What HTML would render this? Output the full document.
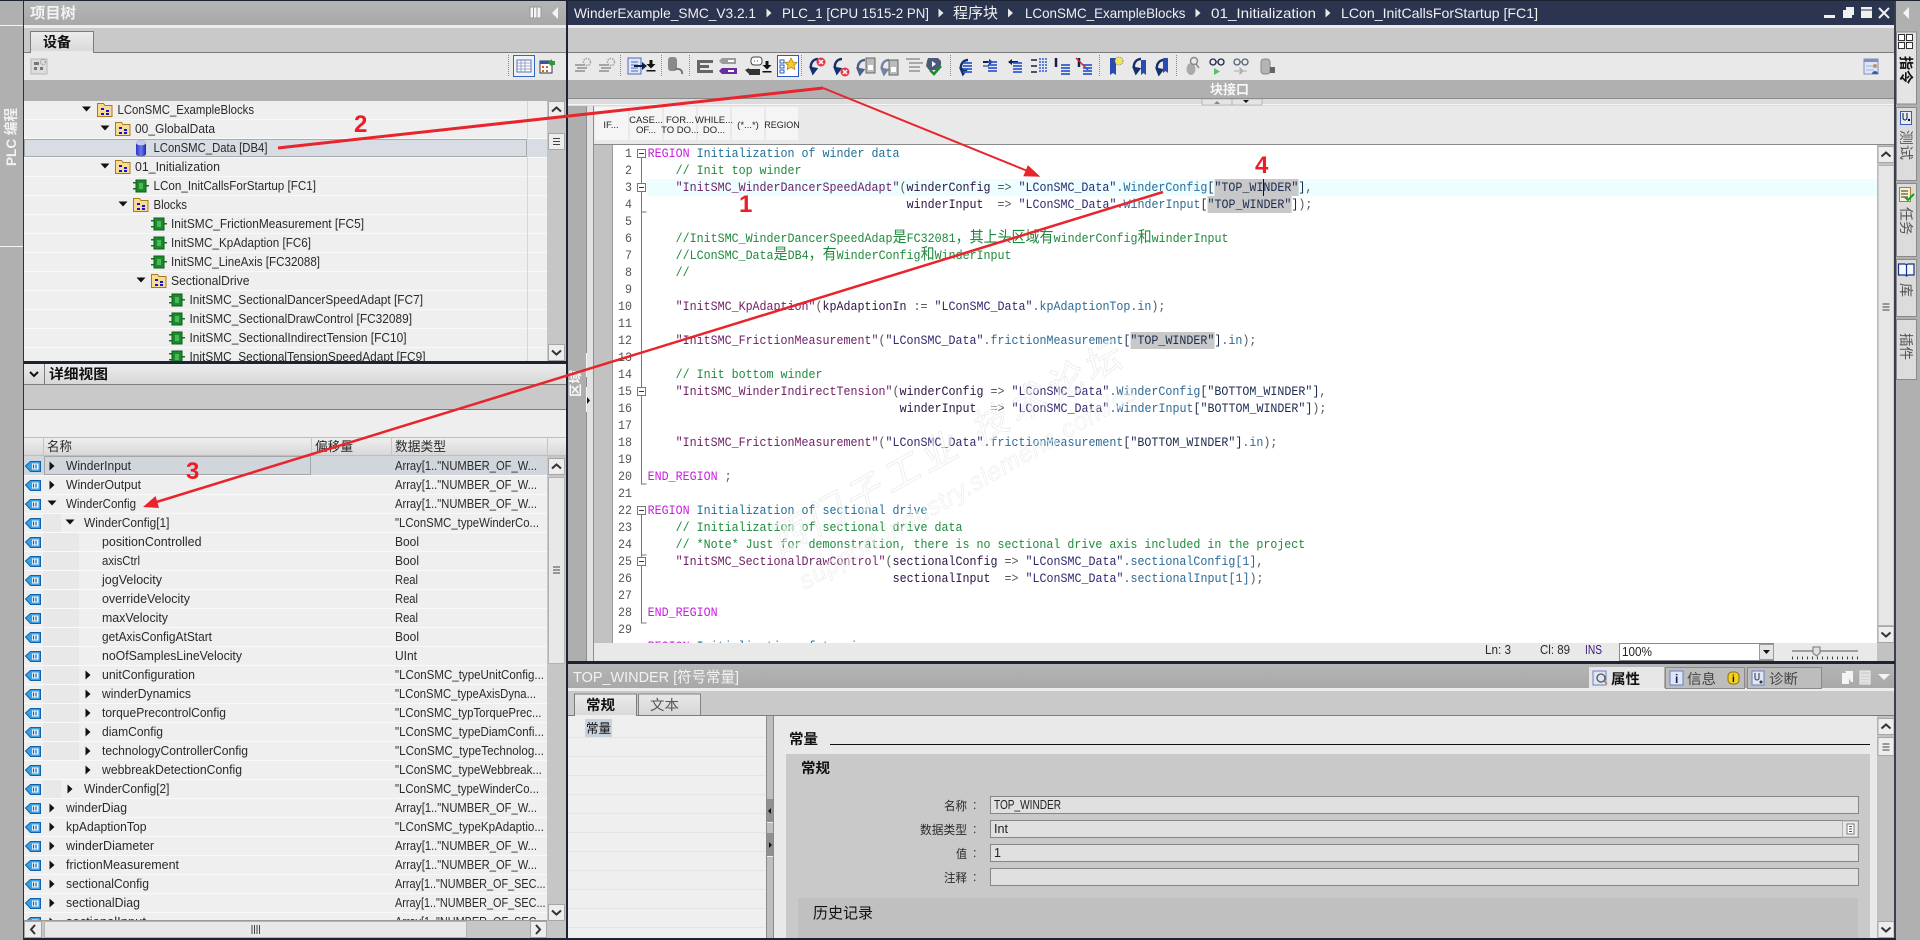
<!DOCTYPE html>
<html><head><meta charset="utf-8"><title>TIA Portal</title>
<style>
html,body{margin:0;padding:0;background:#1c2333;overflow:hidden}
svg{display:block}
text{font-family:"Liberation Sans","Noto Sans CJK SC",sans-serif;font-size:12.5px;fill:#2a2a2a;white-space:pre}
.cj{font-family:"Noto Sans CJK SC","WenQuanYi Zen Hei",sans-serif}
.w{fill:#f0f0f0}
.c text{font-family:"Liberation Mono","Noto Sans CJK SC",monospace;font-size:13px}
.hz{font-family:"Noto Sans CJK SC",monospace;font-size:15.6px}
.kw{fill:#c81ee0}.rc{fill:#1f6f98}.cm{fill:#1e8a3c}.fn{fill:#6e1e62}.op{fill:#555}.pa{fill:#2a1440}.db{fill:#2f2a6e}.me{fill:#2c6a96}.st{fill:#1c2c50}
.n{font-weight:bold;font-size:24px;fill:#ee1c25}
.sn{font-size:9.5px;fill:#222;text-anchor:middle}
</style></head><body>
<svg xmlns="http://www.w3.org/2000/svg" width="1920" height="940" viewBox="0 0 1920 940">
<defs>
<linearGradient id="gT" x1="0" y1="0" x2="0" y2="1"><stop offset="0" stop-color="#b6b6b6"/><stop offset="1" stop-color="#a8a8a8"/></linearGradient>
<linearGradient id="gH" x1="0" y1="0" x2="0" y2="1"><stop offset="0" stop-color="#f0f0f0"/><stop offset="1" stop-color="#d6d6d6"/></linearGradient>
<linearGradient id="gD" x1="0" y1="0" x2="0" y2="1"><stop offset="0" stop-color="#ececec"/><stop offset="1" stop-color="#d8d8d8"/></linearGradient>
<linearGradient id="gC" x1="0" y1="0" x2="1" y2="0"><stop offset="0" stop-color="#2c35c8"/><stop offset=".5" stop-color="#6c78f0"/><stop offset="1" stop-color="#2028a8"/></linearGradient>
<g id="fo"><path d="M0.5 1.5h6l1.500 2h7v11h-14.500z" fill="#f7dc96" stroke="#a87a1c"/><path d="M4 6h3v2h-3zM4 11h3v2h-3zM9 8h3v2h-3zM9 11h3v2h-3z" fill="#1414d8"/></g>
<g id="fc"><path d="M0 4h4v1.500h-4zM0 10h4v1.500h-4zM12 7h4v1.500h-4z" fill="#1a6e26"/><rect x="3" y="2" width="10" height="12" fill="#1c8a2c" stroke="#0e5e1a"/><rect x="6" y="5" width="4" height="6" fill="#48b858"/></g>
<g id="dbi"><path d="M0 3a5 2.500 0 0 1 10 0v11a5 2.500 0 0 1-10 0z" fill="url(#gC)"/><ellipse cx="5" cy="3" rx="5" ry="2.300" fill="#c8ccf4"/></g>
<g id="tag"><path d="M0.500 6l5-4.500h10v10h-10z" fill="#3aa0e0" stroke="#0e62b0"/><rect x="7" y="3.500" width="6.500" height="6" fill="#f2f8ff"/><path d="M8.500 4.500v4M11 4.500v4" stroke="#0e62b0" stroke-width="1.200"/></g>
<path id="ad" d="M-4.500-2.500h9l-4.500 5z" fill="#111"/>
<path id="ar" d="M-2.500-4.500v9l5-4.500z" fill="#111"/>
<path id="at" d="M-2.500-4.500v9l5-4.500z" fill="#e8e8e8"/>
<g id="su"><rect x=".5" y=".5" width="16" height="16" fill="#ededed" stroke="#a6a6a6"/><path d="M4 10.500l4.500-4 4.500 4" fill="none" stroke="#333" stroke-width="2"/></g>
<g id="sd"><rect x=".5" y=".5" width="16" height="16" fill="#ededed" stroke="#a6a6a6"/><path d="M4 6.500l4.500 4 4.500-4" fill="none" stroke="#333" stroke-width="2"/></g>
<g id="gr"><path d="M-3.500-3h7M-3.500 0h7M-3.500 3h7" stroke="#444"/></g>
<g id="dl"><path d="M-1.500-6h3v4h3l-4.500 4.500-4.500-4.500h3zM-4.500 4h9v1.500h-9z" fill="#111"/></g>
<g id="gs"><path d="M-8-2h10v2h-10zM-6 1h10v2h-10zM-8 4h10v2h-10z" fill="#a6a6a6"/><circle cx="4" cy="-4" r="3.500" fill="none" stroke="#a0a0a0" stroke-width="1.500" stroke-dasharray="1.500 1"/></g>
<g id="cb"><path d="M3-7a7 7 0 0 0-5 12M-4 2l2 5 3-4z" fill="none" stroke="#14306e" stroke-width="2.500"/></g>
<g id="rx"><circle r="4.500" fill="#e23a4a"/><path d="M-2-2l4 4M2-2l-4 4" stroke="#fff" stroke-width="1.500"/></g>
<g id="bl"><path d="M-1-4h9M-1-1h9M-1 2h9M-1 5h9" stroke="#2c5cd0" stroke-width="1.800"/></g>
<g id="lp"><circle cx="-4" cy="-3" r="3" fill="none" stroke="#1a2a4a" stroke-width="1.300"/><circle cx="4" cy="-3" r="3" fill="none" stroke="#1a2a4a" stroke-width="1.300"/><path d="M-1-3h2" stroke="#1a2a4a"/></g>
</defs>

<!-- left strip -->
<rect x="0" y="0" width="23" height="940" fill="#b0b0b0"/>
<rect x="0" y="25" width="23" height="1" fill="#f4f4f4"/>
<rect x="0" y="246" width="23" height="1" fill="#f4f4f4"/>
<text transform="translate(16,166) rotate(-90)" textLength="58" lengthAdjust="spacingAndGlyphs" style="font-size:14px;font-weight:bold;fill:#f2f2f2">PLC 编程</text>

<!-- project tree -->
<rect x="24" y="1" width="542" height="24" fill="url(#gT)"/>
<text x="30" y="18" textLength="46" lengthAdjust="spacingAndGlyphs" style="font-size:15px;font-weight:bold;fill:#f2f2f2">项目树</text>
<path d="M530 7h11v11h-11zM533.500 7v11M537 7v11" fill="#f4f4f4" stroke="#999"/>
<path d="M558 7v12l-6-6z" fill="#f4f4f4"/>
<rect x="24" y="25" width="542" height="3" fill="#ececec"/>
<rect x="24" y="28" width="542" height="24" fill="#c9c9c9"/>
<rect x="24" y="52" width="542" height="1" fill="#7d7d7d"/>
<path d="M30.500 53v-21.500h63v21.500" fill="url(#gD)" stroke="#7d7d7d"/>
<rect x="31" y="51" width="62" height="3" fill="#e9e9e9"/>
<text x="43" y="47" textLength="28" lengthAdjust="spacingAndGlyphs" style="font-size:14px;font-weight:bold;fill:#111">设备</text>
<rect x="24" y="53" width="542" height="27" fill="#e9e9e9"/>
<rect x="31" y="59" width="16" height="15" fill="#dcdcdc" stroke="#b8b8b8"/>
<path d="M34 62h5v3h-5zM34 67h3v3h-3zM40 67h3v3h-3z" fill="#777"/><circle cx="43" cy="62" r="2.500" fill="none" stroke="#888" stroke-dasharray="1 1"/>
<path d="M508.500 55v22" stroke="#888" stroke-dasharray="1 1"/>
<rect x="513.500" y="55.500" width="21" height="21" fill="#eef3fa" stroke="#3468c0"/>
<path d="M517 60h14v12h-14z" fill="#fff" stroke="#6070a0"/><path d="M517 63h14M517 66h14M517 69h14M521 60v12M525 60v12" stroke="#8090c0" stroke-width=".8"/>
<path d="M540 61h12v12h-12z" fill="#fff" stroke="#333"/><path d="M540 61h12v3h-12z" fill="#2a5ab0"/><path d="M542 66h2v2h-2zM546 66h2v2h-2zM542 70h2v2h-2zM546 70h2v2h-2z" fill="#e06020"/><path d="M548 63l4-4v2h3v4h-3v2z" fill="#2a9a3a"/>
<rect x="24" y="80" width="542" height="21" fill="#b0b0b0"/>
<rect x="24" y="101" width="523" height="260" fill="#efefef"/>
<path d="M24 119.500h523M24 138.500h523M24 157.500h523M24 176.500h523M24 195.500h523M24 214.500h523M24 233.500h523M24 252.500h523M24 271.500h523M24 290.500h523M24 309.500h523M24 328.500h523M24 347.500h523" stroke="#f9f9f9"/>
<rect x="527" y="101" width="1" height="260" fill="#d6d6d6"/>
<rect x="24" y="139" width="523" height="18" fill="#d7dde2"/>
<rect x="24.500" y="139.500" width="502" height="17" fill="none" stroke="#777" stroke-dasharray="1 1"/>
<use href="#ad" x="86.500" y="109"/><use href="#fo" x="97" y="102"/>
<text x="117.500" y="114" textLength="136.500" lengthAdjust="spacingAndGlyphs">LConSMC_ExampleBlocks</text>
<use href="#ad" x="105" y="128"/><use href="#fo" x="115" y="121"/>
<text x="135" y="133" textLength="80" lengthAdjust="spacingAndGlyphs">00_GlobalData</text>
<use href="#dbi" x="136" y="140"/>
<text x="153.500" y="152" textLength="114" lengthAdjust="spacingAndGlyphs">LConSMC_Data [DB4]</text>
<use href="#ad" x="105" y="166"/><use href="#fo" x="115" y="159"/>
<text x="135" y="171" textLength="85" lengthAdjust="spacingAndGlyphs">01_Initialization</text>
<use href="#fc" x="133" y="178"/>
<text x="153.500" y="190" textLength="162.500" lengthAdjust="spacingAndGlyphs">LCon_InitCallsForStartup [FC1]</text>
<use href="#ad" x="123" y="204"/><use href="#fo" x="133" y="197"/>
<text x="153.500" y="209" textLength="33.500" lengthAdjust="spacingAndGlyphs">Blocks</text>
<use href="#fc" x="151" y="216"/>
<text x="171" y="228" textLength="193" lengthAdjust="spacingAndGlyphs">InitSMC_FrictionMeasurement [FC5]</text>
<use href="#fc" x="151" y="235"/>
<text x="171" y="247" textLength="140" lengthAdjust="spacingAndGlyphs">InitSMC_KpAdaption [FC6]</text>
<use href="#fc" x="151" y="254"/>
<text x="171" y="266" textLength="149" lengthAdjust="spacingAndGlyphs">InitSMC_LineAxis [FC32088]</text>
<use href="#ad" x="141" y="280"/><use href="#fo" x="151" y="273"/>
<text x="171" y="285" textLength="78.500" lengthAdjust="spacingAndGlyphs">SectionalDrive</text>
<use href="#fc" x="169" y="292"/>
<text x="189.500" y="304" textLength="233.500" lengthAdjust="spacingAndGlyphs">InitSMC_SectionalDancerSpeedAdapt [FC7]</text>
<use href="#fc" x="169" y="311"/>
<text x="189.500" y="323" textLength="222.500" lengthAdjust="spacingAndGlyphs">InitSMC_SectionalDrawControl [FC32089]</text>
<use href="#fc" x="169" y="330"/>
<text x="189.500" y="342" textLength="217" lengthAdjust="spacingAndGlyphs">InitSMC_SectionalIndirectTension [FC10]</text>
<use href="#fc" x="169" y="349"/>
<text x="189.500" y="361" textLength="236" lengthAdjust="spacingAndGlyphs">InitSMC_SectionalTensionSpeedAdapt [FC9]</text>
<rect x="547" y="101" width="19" height="260" fill="#c6c6c6"/>
<use href="#su" x="548" y="101"/><use href="#sd" x="548" y="344"/>
<rect x="548.500" y="133.500" width="16" height="16" fill="#ededed" stroke="#a6a6a6"/><use href="#gr" x="556.500" y="141.500"/>
<rect x="24" y="361" width="544" height="3" fill="#1c2333"/>

<!-- detail view -->
<rect x="24" y="364" width="542" height="20" fill="url(#gD)"/>
<rect x="24" y="384" width="542" height="1" fill="#7d7d7d"/>
<rect x="44" y="364" width="1" height="20" fill="#7d7d7d"/>
<path d="M30 372l4 4 4-4" fill="none" stroke="#111" stroke-width="2"/>
<text x="49" y="379" textLength="59" lengthAdjust="spacingAndGlyphs" style="font-size:14px;font-weight:bold;fill:#111">详细视图</text>
<rect x="24" y="385" width="542" height="24" fill="#c9c9c9"/>
<rect x="24" y="409" width="542" height="1" fill="#7d7d7d"/>
<rect x="24" y="410" width="542" height="27" fill="#eeeeee"/>
<rect x="24" y="437" width="542" height="19" fill="url(#gH)"/>
<path d="M24 437.500h542M24 455.500h542" stroke="#bdbdbd"/>
<path d="M43.500 437v19M311.500 437v19M391.500 437v19M547.500 437v19" stroke="#c4c4c4"/>
<text x="47" y="451" textLength="25" lengthAdjust="spacingAndGlyphs" style="font-size:13px">名称</text>
<text x="315" y="451" textLength="38" lengthAdjust="spacingAndGlyphs" style="font-size:13px">偏移量</text>
<text x="395" y="451" textLength="51" lengthAdjust="spacingAndGlyphs" style="font-size:13px">数据类型</text>
<rect x="24" y="456" width="523" height="465" fill="#efefef"/>
<rect x="43" y="514" width="18" height="19" fill="#e8e8e8"/>
<rect x="43" y="533" width="36" height="228" fill="#e8e8e8"/>
<rect x="43" y="780" width="18" height="19" fill="#e8e8e8"/>
<rect x="24" y="456" width="523" height="19" fill="#d0d6dc"/>
<rect x="44.500" y="456.500" width="266" height="18" fill="none" stroke="#777" stroke-dasharray="1 1"/>
<path d="M24 475.500h523M24 494.500h523M24 513.500h523M24 532.500h523M24 551.500h523M24 570.500h523M24 589.500h523M24 608.500h523M24 627.500h523M24 646.500h523M24 665.500h523M24 684.500h523M24 703.500h523M24 722.500h523M24 741.500h523M24 760.500h523M24 779.500h523M24 798.500h523M24 817.500h523M24 836.500h523M24 855.500h523M24 874.500h523M24 893.500h523M24 912.500h523" stroke="#f9f9f9"/>
<use href="#tag" x="25" y="460"/><use href="#tag" x="25" y="479"/><use href="#tag" x="25" y="498"/><use href="#tag" x="25" y="517"/><use href="#tag" x="25" y="536"/><use href="#tag" x="25" y="555"/><use href="#tag" x="25" y="574"/><use href="#tag" x="25" y="593"/><use href="#tag" x="25" y="612"/><use href="#tag" x="25" y="631"/><use href="#tag" x="25" y="650"/><use href="#tag" x="25" y="669"/><use href="#tag" x="25" y="688"/><use href="#tag" x="25" y="707"/><use href="#tag" x="25" y="726"/><use href="#tag" x="25" y="745"/><use href="#tag" x="25" y="764"/><use href="#tag" x="25" y="783"/><use href="#tag" x="25" y="802"/><use href="#tag" x="25" y="821"/><use href="#tag" x="25" y="840"/><use href="#tag" x="25" y="859"/><use href="#tag" x="25" y="878"/><use href="#tag" x="25" y="897"/><use href="#tag" x="25" y="916"/>
<use href="#ar" x="52" y="466"/><text x="66" y="470" textLength="65" lengthAdjust="spacingAndGlyphs">WinderInput</text><text x="395" y="470" textLength="142" lengthAdjust="spacingAndGlyphs">Array[1.."NUMBER_OF_W...</text>
<use href="#ar" x="52" y="485"/><text x="66" y="489" textLength="75" lengthAdjust="spacingAndGlyphs">WinderOutput</text><text x="395" y="489" textLength="142" lengthAdjust="spacingAndGlyphs">Array[1.."NUMBER_OF_W...</text>
<use href="#ad" x="52" y="503"/><text x="66" y="508" textLength="70" lengthAdjust="spacingAndGlyphs">WinderConfig</text><text x="395" y="508" textLength="142" lengthAdjust="spacingAndGlyphs">Array[1.."NUMBER_OF_W...</text>
<use href="#ad" x="70" y="522"/><text x="84" y="527" textLength="85.500" lengthAdjust="spacingAndGlyphs">WinderConfig[1]</text><text x="395" y="527" textLength="144" lengthAdjust="spacingAndGlyphs">"LConSMC_typeWinderCo...</text>
<text x="102" y="546" textLength="99.500" lengthAdjust="spacingAndGlyphs">positionControlled</text><text x="395" y="546" textLength="24" lengthAdjust="spacingAndGlyphs">Bool</text>
<text x="102" y="565" textLength="38" lengthAdjust="spacingAndGlyphs">axisCtrl</text><text x="395" y="565" textLength="24" lengthAdjust="spacingAndGlyphs">Bool</text>
<text x="102" y="584" textLength="60" lengthAdjust="spacingAndGlyphs">jogVelocity</text><text x="395" y="584" textLength="23" lengthAdjust="spacingAndGlyphs">Real</text>
<text x="102" y="603" textLength="88" lengthAdjust="spacingAndGlyphs">overrideVelocity</text><text x="395" y="603" textLength="23" lengthAdjust="spacingAndGlyphs">Real</text>
<text x="102" y="622" textLength="66" lengthAdjust="spacingAndGlyphs">maxVelocity</text><text x="395" y="622" textLength="23" lengthAdjust="spacingAndGlyphs">Real</text>
<text x="102" y="641" textLength="110" lengthAdjust="spacingAndGlyphs">getAxisConfigAtStart</text><text x="395" y="641" textLength="24" lengthAdjust="spacingAndGlyphs">Bool</text>
<text x="102" y="660" textLength="140" lengthAdjust="spacingAndGlyphs">noOfSamplesLineVelocity</text><text x="395" y="660" textLength="22" lengthAdjust="spacingAndGlyphs">UInt</text>
<use href="#ar" x="88" y="675"/><text x="102" y="679" textLength="93" lengthAdjust="spacingAndGlyphs">unitConfiguration</text><text x="395" y="679" textLength="149" lengthAdjust="spacingAndGlyphs">"LConSMC_typeUnitConfig...</text>
<use href="#ar" x="88" y="694"/><text x="102" y="698" textLength="89" lengthAdjust="spacingAndGlyphs">winderDynamics</text><text x="395" y="698" textLength="141" lengthAdjust="spacingAndGlyphs">"LConSMC_typeAxisDyna...</text>
<use href="#ar" x="88" y="713"/><text x="102" y="717" textLength="124" lengthAdjust="spacingAndGlyphs">torquePrecontrolConfig</text><text x="395" y="717" textLength="146.500" lengthAdjust="spacingAndGlyphs">"LConSMC_typTorquePrec...</text>
<use href="#ar" x="88" y="732"/><text x="102" y="736" textLength="61" lengthAdjust="spacingAndGlyphs">diamConfig</text><text x="395" y="736" textLength="149" lengthAdjust="spacingAndGlyphs">"LConSMC_typeDiamConfi...</text>
<use href="#ar" x="88" y="751"/><text x="102" y="755" textLength="146" lengthAdjust="spacingAndGlyphs">technologyControllerConfig</text><text x="395" y="755" textLength="149" lengthAdjust="spacingAndGlyphs">"LConSMC_typeTechnolog...</text>
<use href="#ar" x="88" y="770"/><text x="102" y="774" textLength="140" lengthAdjust="spacingAndGlyphs">webbreakDetectionConfig</text><text x="395" y="774" textLength="147" lengthAdjust="spacingAndGlyphs">"LConSMC_typeWebbreak...</text>
<use href="#ar" x="70" y="789"/><text x="84" y="793" textLength="85.500" lengthAdjust="spacingAndGlyphs">WinderConfig[2]</text><text x="395" y="793" textLength="144" lengthAdjust="spacingAndGlyphs">"LConSMC_typeWinderCo...</text>
<use href="#ar" x="52" y="808"/><text x="66" y="812" textLength="61" lengthAdjust="spacingAndGlyphs">winderDiag</text><text x="395" y="812" textLength="142" lengthAdjust="spacingAndGlyphs">Array[1.."NUMBER_OF_W...</text>
<use href="#ar" x="52" y="827"/><text x="66" y="831" textLength="80.500" lengthAdjust="spacingAndGlyphs">kpAdaptionTop</text><text x="395" y="831" textLength="149" lengthAdjust="spacingAndGlyphs">"LConSMC_typeKpAdaptio...</text>
<use href="#ar" x="52" y="846"/><text x="66" y="850" textLength="88" lengthAdjust="spacingAndGlyphs">winderDiameter</text><text x="395" y="850" textLength="142" lengthAdjust="spacingAndGlyphs">Array[1.."NUMBER_OF_W...</text>
<use href="#ar" x="52" y="865"/><text x="66" y="869" textLength="113" lengthAdjust="spacingAndGlyphs">frictionMeasurement</text><text x="395" y="869" textLength="142" lengthAdjust="spacingAndGlyphs">Array[1.."NUMBER_OF_W...</text>
<use href="#ar" x="52" y="884"/><text x="66" y="888" textLength="83" lengthAdjust="spacingAndGlyphs">sectionalConfig</text><text x="395" y="888" textLength="150.500" lengthAdjust="spacingAndGlyphs">Array[1.."NUMBER_OF_SEC...</text>
<use href="#ar" x="52" y="903"/><text x="66" y="907" textLength="74" lengthAdjust="spacingAndGlyphs">sectionalDiag</text><text x="395" y="907" textLength="150.500" lengthAdjust="spacingAndGlyphs">Array[1.."NUMBER_OF_SEC...</text>
<use href="#ar" x="52" y="922"/><text x="66" y="926" textLength="80" lengthAdjust="spacingAndGlyphs">sectionalInput</text><text x="395" y="926" textLength="150.500" lengthAdjust="spacingAndGlyphs">Array[1.."NUMBER_OF_SEC...</text>
<rect x="547" y="456" width="19" height="482" fill="#c6c6c6"/>
<use href="#su" x="548" y="458"/>
<rect x="548.500" y="477.500" width="16" height="186" fill="#e8e8e8" stroke="#b4b4b4"/><use href="#gr" x="556.500" y="570"/>
<use href="#sd" x="548" y="904"/>
<rect x="24" y="920" width="523" height="18" fill="#c6c6c6"/>
<rect x="24" y="920" width="523" height="1" fill="#9a9a9a"/>
<rect x="24.500" y="921.500" width="17" height="16" fill="#ededed" stroke="#a6a6a6"/><path d="M35 925l-4 4.500 4 4.500" fill="none" stroke="#333" stroke-width="2"/>
<rect x="44.500" y="921.500" width="422" height="16" fill="#e8e8e8" stroke="#b4b4b4"/><path d="M252 925v9M254.500 925v9M257 925v9M259.500 925v9" stroke="#444"/>
<rect x="530.500" y="921.500" width="16" height="16" fill="#ededed" stroke="#a6a6a6"/><path d="M536 925l4 4.500-4 4.500" fill="none" stroke="#333" stroke-width="2"/>

<!-- editor frame -->
<rect x="568" y="1" width="1327" height="24" fill="#2c3550"/>
<g style="font-size:14px">
<text class="w" x="574" y="18" textLength="182" lengthAdjust="spacingAndGlyphs" style="font-size:14px">WinderExample_SMC_V3.2.1</text><use href="#at" x="769" y="13"/>
<text class="w" x="782" y="18" textLength="147" lengthAdjust="spacingAndGlyphs" style="font-size:14px">PLC_1 [CPU 1515-2 PN]</text><use href="#at" x="941" y="13"/>
<text class="w" x="953" y="18" textLength="45" lengthAdjust="spacingAndGlyphs" style="font-size:15px">程序块</text><use href="#at" x="1010.500" y="13"/>
<text class="w" x="1025" y="18" textLength="160.500" lengthAdjust="spacingAndGlyphs" style="font-size:14px">LConSMC_ExampleBlocks</text><use href="#at" x="1198" y="13"/>
<text class="w" x="1211" y="18" textLength="105" lengthAdjust="spacingAndGlyphs" style="font-size:14px">01_Initialization</text><use href="#at" x="1328" y="13"/>
<text class="w" x="1341" y="18" textLength="197" lengthAdjust="spacingAndGlyphs" style="font-size:14px">LCon_InitCallsForStartup [FC1]</text>
</g>
<rect x="1824" y="15" width="11" height="3" fill="#f0f0f0"/>
<path d="M1846 7h8v8h-2v3h-9v-8h3z" fill="#f0f0f0"/>
<rect x="1861" y="7" width="11" height="11" fill="#f0f0f0"/><rect x="1861" y="9.500" width="11" height="1" fill="#2c3550"/>
<path d="M1879 8l10 10M1889 8l-10 10" stroke="#f0f0f0" stroke-width="2"/>
<rect x="568" y="25" width="1327" height="3" fill="#ececec"/>
<rect x="568" y="28" width="1327" height="24" fill="#c9c9c9"/>
<rect x="568" y="52" width="1327" height="1" fill="#7d7d7d"/>
<rect x="568" y="53" width="1327" height="27" fill="#e9e9e9"/>
<rect x="568" y="80" width="1327" height="18" fill="#b0b0b0"/>
<rect x="568" y="98" width="1327" height="1" fill="#8a8a8a"/>
<rect x="568" y="99" width="1327" height="7" fill="#dcdcdc"/>
<rect x="568" y="104" width="1327" height="1" fill="#f6f6f6"/>
<text x="1210" y="94" textLength="39" lengthAdjust="spacingAndGlyphs" style="font-size:13px;font-weight:bold;fill:#f8f8f8">块接口</text>
<path d="M1202 99h30v6h-30zM1232 99h30v6h-30z" fill="#e4e4e4" stroke="#999" stroke-width=".6"/><path d="M1214 104l3-3 3 3z" fill="#888"/><path d="M1243 100h6l-3 3z" fill="#111"/>

<!-- toolbar icons -->
<g>
<use href="#gs" x="583" y="66"/><use href="#gs" x="607" y="66"/>
<path d="M620.500 55v22M661.500 55v22M689.500 55v22M801.500 55v22M950.500 55v22M1099.500 55v22M1176.500 55v22" stroke="#888" stroke-dasharray="1 1"/>
<rect x="628" y="58" width="13" height="16" fill="#dfe6f8" stroke="#4a6ac0"/><path d="M631 62h7M631 65h7M631 68h7M631 71h7" stroke="#4a6ac0"/><path d="M634 65h8v-3l5 4-5 4v-3h-8z" fill="#12204a"/>
<use href="#dl" x="651" y="66"/>
<rect x="668" y="57" width="9" height="14" rx="3" fill="#8a8a8a"/><path d="M682 74a4 4 0 0 0-4-5h-3" fill="none" stroke="#777" stroke-width="2"/>
<path d="M697 60h16v3h-16zM697 65h12v3h-12zM697 70h16v3h-16zM697 60h3v13h-3z" fill="#666"/>
<path d="M722 58h14v6h-14l-3-3z" fill="#9a9a9a"/><path d="M722 68h15v6h-15l-3-3z" fill="#6a2aa0"/><path d="M728 60h6v2h-6zM728 70h6v2h-6z" fill="#fff"/>
<path d="M749 69h11v6h-11zM745 70l4-2v6z" fill="#333"/><rect x="751" y="57" width="11" height="8" rx="3" fill="#fff" stroke="#444"/><path d="M754 61h1M757 61h1" stroke="#444"/>
<use href="#dl" x="767" y="67"/>
<rect x="777.500" y="55.500" width="21" height="21" fill="#fff" stroke="#2a5ac0"/><path d="M780 60h4v3h-4zM780 65h4v3h-4zM780 70h4v3h-4z" fill="none" stroke="#2a5ac0"/><path d="M791 58l2 4 4 .5-3 3 .8 4-3.800-2-3.800 2 .8-4-3-3 4-.5z" fill="#f4c830" stroke="#a87a10" stroke-width=".7"/>
<use href="#cb" x="815" y="66"/><use href="#rx" x="821" y="62"/>
<use href="#cb" x="839" y="66"/><use href="#rx" x="845" y="72"/>
<use href="#cb" x="862" y="67" opacity=".75"/><rect x="866" y="58" width="9" height="15" fill="#bbb" stroke="#666"/><rect x="868" y="65" width="5" height="5" fill="#fff"/>
<use href="#cb" x="886" y="67" opacity=".55"/><rect x="889" y="60" width="9" height="15" fill="#bbb" stroke="#666"/><rect x="891" y="67" width="5" height="5" fill="#fff"/>
<path d="M906 59h14M909 63h14M909 67h11M909 71h11" stroke="#a8a8a8" stroke-width="2"/>
<path d="M928 58h10l3 3v4l-5 5h-7l-3-4 1-5z" fill="#4a5a78"/><path d="M932 61v6l4-3z" fill="#fff"/><path d="M930 70l4 4 7-8" fill="none" stroke="#1a8a2a" stroke-width="2.500"/>
<use href="#cb" x="965" y="67"/><use href="#bl" x="964" y="67"/>
<path d="M983 61h6v-2l4 3-4 3v-2h-6z" fill="#12204a"/><use href="#bl" x="989" y="66" /><path d="M983 66h6" stroke="#12204a"/>
<path d="M1018 61h-6v-2l-4 3 4 3v-2h6z" fill="#12204a"/><use href="#bl" x="1014" y="67"/>
<path d="M1031 60h6M1031 66h6M1031 72h6" stroke="#12204a" stroke-width="1.500"/><path d="M1040 58v15M1043 58v15M1046 58v15" stroke="#2c5cd0" stroke-dasharray="2 1" stroke-width="1.500"/>
<path d="M1056 58v9" stroke="#12204a" stroke-width="2.500"/><use href="#bl" x="1062" y="69" />
<path d="M1079 58v9" stroke="#12204a" stroke-width="2.500"/><path d="M1076 58l12 12" stroke="#d82030" stroke-width="1.500"/><use href="#bl" x="1084" y="69"/>
<path d="M1110 58h6v17l-3-2-3 2z" fill="#2a4ab0"/><circle cx="1119" cy="61" r="4" fill="#f0e850" stroke="#888" stroke-dasharray="1 1"/>
<use href="#cb" x="1138" y="66"/><path d="M1141 60h5v15l-2.500-2-2.500 2z" fill="#2a4ab0"/>
<use href="#cb" x="1161" y="67"/><path d="M1163 58h5v15l-2.500-2-2.500 2z" fill="#2a4ab0"/>
<ellipse cx="1191" cy="69" rx="4.500" ry="6" fill="#aaa"/><circle cx="1194" cy="61" r="3.500" fill="none" stroke="#888" stroke-width="1.500"/><path d="M1196 64l3 4" stroke="#888" stroke-width="1.500"/>
<use href="#lp" x="1217" y="65"/><path d="M1214 68v7l6-3.500z" fill="#5ac06a"/>
<use href="#lp" x="1241" y="65" opacity=".7"/><path d="M1234 71h5M1247 71h-4M1240 68v6l3-3z" stroke="#aaa" fill="#bbb"/>
<rect x="1261" y="59" width="9" height="15" rx="3" fill="#b4b4b4" stroke="#888"/><rect x="1270" y="67" width="5" height="6" fill="#666"/>
<rect x="1864" y="59" width="14" height="15" fill="#dfe6f8" stroke="#8090c0"/><rect x="1864" y="59" width="14" height="3" fill="#7a90c8"/><path d="M1866 66h8M1866 70h8" stroke="#a0b0d0"/><circle cx="1875" cy="66" r="2" fill="#c89060"/><path d="M1872 74a3 3 0 0 1 6 0z" fill="#1a68b8"/>
</g>

<!-- editor body -->
<rect x="568" y="106" width="18" height="555" fill="#aeaeae"/>
<rect x="586" y="106" width="7" height="555" fill="#e2e2e2"/>
<rect x="586" y="106" width="1" height="555" fill="#8e8e8e"/>
<rect x="593" y="106" width="1302" height="38" fill="#e9e9e9"/>
<rect x="593" y="106" width="1" height="555" fill="#8e8e8e"/>
<rect x="593" y="144" width="1302" height="1" fill="#8a8a8a"/>
<rect x="594" y="145" width="18" height="498" fill="#c2c2c2"/>
<rect x="612" y="145" width="1265" height="498" fill="#ffffff"/>
<rect x="612" y="145" width="1" height="498" fill="#9a9a9a"/>
<rect x="594" y="643" width="1283" height="18" fill="#e9e9e9"/>
<rect x="1877" y="145" width="18" height="516" fill="#c2c2c2"/>
<path d="M595 107h33v33h-33zM630 107h32v33h-32zM664 107h32v33h-32zM698 107h32v33h-32zM732 107h32v33h-32zM766 107h32v33h-32z" fill="#f5f5f5"/>
<text class="sn" x="611" y="128">IF...</text>
<text class="sn" x="646" y="123">CASE...</text><text class="sn" x="646" y="133">OF...</text>
<text class="sn" x="680" y="123">FOR...</text><text class="sn" x="680" y="133">TO DO...</text>
<text class="sn" x="714" y="123">WHILE...</text><text class="sn" x="714" y="133">DO...</text>
<text class="sn" x="748" y="128">(*...*)</text>
<text class="sn" x="782" y="128" style="font-size:9px">REGION</text>

<rect x="647" y="179" width="1230" height="17" fill="#ecfeff"/>
<rect x="1214.600" y="179" width="84" height="17" fill="#c8c8c8"/>
<rect x="1207.600" y="196" width="84" height="17" fill="#c8c8c8"/>
<rect x="1130.600" y="332" width="84" height="17" fill="#c8c8c8"/>
<rect x="1263" y="179" width="1" height="17" fill="#111"/>

<!-- folding -->
<path d="M641.500 157v327h5M641.500 191v21h5M641.500 514v109h5M641.500 534v21h5" fill="none" stroke="#777"/>
<path d="M637.500 149.500h8v8h-8zM637.500 183.500h8v8h-8zM637.500 387.500h8v8h-8zM637.500 506.500h8v8h-8zM637.500 557.500h8v8h-8z" fill="#fff" stroke="#777"/>
<path d="M639 153.500h5M639 187.500h5M639 391.500h5M639 510.500h5M639 561.500h5" stroke="#333"/>

<!-- line numbers -->
<g class="c" transform="translate(632,0) scale(.8974,1)" style="text-anchor:end">
<text class="op" y="157">1</text><text class="op" y="174">2</text><text class="op" y="191">3</text><text class="op" y="208">4</text><text class="op" y="225">5</text><text class="op" y="242">6</text><text class="op" y="259">7</text><text class="op" y="276">8</text><text class="op" y="293">9</text><text class="op" y="310">10</text><text class="op" y="327">11</text><text class="op" y="344">12</text><text class="op" y="361">13</text><text class="op" y="378">14</text><text class="op" y="395">15</text><text class="op" y="412">16</text><text class="op" y="429">17</text><text class="op" y="446">18</text><text class="op" y="463">19</text><text class="op" y="480">20</text><text class="op" y="497">21</text><text class="op" y="514">22</text><text class="op" y="531">23</text><text class="op" y="548">24</text><text class="op" y="565">25</text><text class="op" y="582">26</text><text class="op" y="599">27</text><text class="op" y="616">28</text><text class="op" y="633">29</text>
</g>

<!-- code -->
<g class="c" transform="translate(647.600,0) scale(.8974,1)" style="white-space:pre">
<text y="157"><tspan class="kw">REGION</tspan><tspan class="rc"> Initialization of winder data</tspan></text>
<text y="174" x="31.200" class="cm">// Init top winder</text>
<text y="191" x="31.200"><tspan class="fn">"InitSMC_WinderDancerSpeedAdapt"</tspan><tspan class="op">(</tspan><tspan class="pa">winderConfig</tspan><tspan class="op"> =&gt; </tspan><tspan class="db">"LConSMC_Data"</tspan><tspan class="me">.WinderConfig</tspan><tspan class="st">["TOP_WINDER"]</tspan><tspan class="op">,</tspan></text>
<text y="208" x="288.600"><tspan class="pa">winderInput</tspan><tspan class="op">  =&gt; </tspan><tspan class="db">"LConSMC_Data"</tspan><tspan class="me">.WinderInput</tspan><tspan class="st">["TOP_WINDER"]</tspan><tspan class="op">);</tspan></text>
<text y="242" class="cm"><tspan x="31.200">//InitSMC_WinderDancerSpeedAdap</tspan><tspan x="273" class="hz">是</tspan><tspan x="288.600">FC32081</tspan><tspan x="343.200" class="hz">，</tspan><tspan x="358.800" class="hz">其上头区域有</tspan><tspan x="452.400">winderConfig</tspan><tspan x="546" class="hz">和</tspan><tspan x="561.600">winderInput</tspan></text>
<text y="259" class="cm"><tspan x="31.200">//LConSMC_Data</tspan><tspan x="140.400" class="hz">是</tspan><tspan x="156">DB4</tspan><tspan x="179.400" class="hz">，</tspan><tspan x="195" class="hz">有</tspan><tspan x="210.600">WinderConfig</tspan><tspan x="304.200" class="hz">和</tspan><tspan x="319.800">WinderInput</tspan></text>
<text y="276" x="31.200" class="cm">//</text>
<text y="310" x="31.200"><tspan class="fn">"InitSMC_KpAdaption"</tspan><tspan class="op">(</tspan><tspan class="pa">kpAdaptionIn</tspan><tspan class="op"> := </tspan><tspan class="db">"LConSMC_Data"</tspan><tspan class="me">.kpAdaptionTop.in</tspan><tspan class="op">);</tspan></text>
<text y="344" x="31.200"><tspan class="fn">"InitSMC_FrictionMeasurement"</tspan><tspan class="op">(</tspan><tspan class="db">"LConSMC_Data"</tspan><tspan class="me">.frictionMeasurement</tspan><tspan class="st">["TOP_WINDER"]</tspan><tspan class="me">.in</tspan><tspan class="op">);</tspan></text>
<text y="378" x="31.200" class="cm">// Init bottom winder</text>
<text y="395" x="31.200"><tspan class="fn">"InitSMC_WinderIndirectTension"</tspan><tspan class="op">(</tspan><tspan class="pa">winderConfig</tspan><tspan class="op"> =&gt; </tspan><tspan class="db">"LConSMC_Data"</tspan><tspan class="me">.WinderConfig</tspan><tspan class="st">["BOTTOM_WINDER"]</tspan><tspan class="op">,</tspan></text>
<text y="412" x="280.800"><tspan class="pa">winderInput</tspan><tspan class="op">  =&gt; </tspan><tspan class="db">"LConSMC_Data"</tspan><tspan class="me">.WinderInput</tspan><tspan class="st">["BOTTOM_WINDER"]</tspan><tspan class="op">);</tspan></text>
<text y="446" x="31.200"><tspan class="fn">"InitSMC_FrictionMeasurement"</tspan><tspan class="op">(</tspan><tspan class="db">"LConSMC_Data"</tspan><tspan class="me">.frictionMeasurement</tspan><tspan class="st">["BOTTOM_WINDER"]</tspan><tspan class="me">.in</tspan><tspan class="op">);</tspan></text>
<text y="480"><tspan class="kw">END_REGION</tspan><tspan class="op"> ;</tspan></text>
<text y="514"><tspan class="kw">REGION</tspan><tspan class="rc"> Initialization of sectional drive</tspan></text>
<text y="531" x="31.200" class="cm">// Initialization of sectional drive data</text>
<text y="548" x="31.200" class="cm">// *Note* Just for demonstration, there is no sectional drive axis included in the project</text>
<text y="565" x="31.200"><tspan class="fn">"InitSMC_SectionalDrawControl"</tspan><tspan class="op">(</tspan><tspan class="pa">sectionalConfig</tspan><tspan class="op"> =&gt; </tspan><tspan class="db">"LConSMC_Data"</tspan><tspan class="me">.sectionalConfig[1]</tspan><tspan class="op">,</tspan></text>
<text y="582" x="273"><tspan class="pa">sectionalInput</tspan><tspan class="op">  =&gt; </tspan><tspan class="db">"LConSMC_Data"</tspan><tspan class="me">.sectionalInput[1]</tspan><tspan class="op">);</tspan></text>
<text y="616" class="kw">END_REGION</text>
<text y="650"><tspan class="kw">REGION</tspan><tspan class="rc"> Initialization of tensions</tspan></text>
</g>

<!-- watermark -->
<g style="opacity:.55">
<text transform="translate(778,556) rotate(-29)" textLength="395" style="font-size:37px;font-style:italic;fill:#ffffff;stroke:#dcdcdc;stroke-width:.8">西门子工业 技术论坛</text>
<text transform="translate(805,590) rotate(-30)" textLength="385" style="font-size:25px;font-style:italic;fill:#ffffff;stroke:#dcdcdc;stroke-width:.6">support.industry.siemens.com/cs</text>
</g>

<!-- cover below code -->
<rect x="594" y="643" width="1283" height="18" fill="#e9e9e9"/>
<rect x="593" y="643" width="1" height="18" fill="#8e8e8e"/>
<rect x="1877" y="643" width="18" height="18" fill="#c2c2c2"/>
<!-- editor scrollbar -->
<use href="#su" x="1877.500" y="146"/>
<rect x="1878" y="165.500" width="16" height="460" fill="#e6e6e6" stroke="#b4b4b4"/><use href="#gr" x="1886" y="307"/>
<use href="#sd" x="1877.500" y="626"/>
<!-- status -->
<text x="1485" y="654" textLength="26" lengthAdjust="spacingAndGlyphs">Ln: 3</text>
<text x="1540" y="654" textLength="30" lengthAdjust="spacingAndGlyphs">Cl: 89</text>
<text x="1585" y="654" textLength="17" lengthAdjust="spacingAndGlyphs" style="fill:#3a1a78">INS</text>
<rect x="1619.500" y="643.500" width="154" height="17" fill="#fff" stroke="#8a8a8a"/>
<text x="1622" y="656" textLength="30" lengthAdjust="spacingAndGlyphs" style="fill:#222">100%</text>
<rect x="1759.500" y="644.500" width="14" height="15" fill="#e4e4e4" stroke="#9a9a9a"/><path d="M1763 650h7l-3.500 4z" fill="#111"/>
<path d="M1792 651h66" stroke="#555"/><path d="M1792 658h66" stroke="#444" stroke-dasharray="1 4" stroke-width="3"/>
<path d="M1813 647h7v6l-3.500 3-3.500-3z" fill="#e0e0e0" stroke="#777"/>

<!-- properties panel -->
<rect x="568" y="664" width="1327" height="24" fill="url(#gT)"/>
<text x="573" y="682" textLength="166" lengthAdjust="spacingAndGlyphs" style="font-size:15px;fill:#f2f2f2">TOP_WINDER [符号常量]</text>
<rect x="568" y="688" width="1327" height="3" fill="#ececec"/>
<rect x="568" y="691" width="1327" height="24" fill="#c9c9c9"/>
<rect x="568" y="715" width="1327" height="1" fill="#7d7d7d"/>
<path d="M574.500 716v-22h62v22" fill="url(#gD)" stroke="#7d7d7d"/>
<path d="M638.500 715v-21h62v21" fill="url(#gD)" stroke="#7d7d7d" opacity=".9"/>
<text x="586" y="710" textLength="29" lengthAdjust="spacingAndGlyphs" style="font-size:14px;font-weight:bold;fill:#111">常规</text>
<text x="650" y="710" textLength="29" lengthAdjust="spacingAndGlyphs" style="font-size:14px;fill:#555">文本</text>
<rect x="568" y="716" width="199" height="222" fill="#efefef"/>
<rect x="575" y="715" width="61" height="2" fill="#efefef"/>
<path d="M568 737.500h199M568 756.500h199M568 775.500h199M568 794.500h199M568 813.500h199M568 832.500h199M568 851.500h199M568 870.500h199M568 889.500h199M568 908.500h199M568 927.500h199" stroke="#e4e4e4"/>
<rect x="585" y="719" width="27" height="18" fill="#c8d2dc"/>
<text x="586" y="733" textLength="25" lengthAdjust="spacingAndGlyphs" style="font-size:13px;fill:#111">常量</text>
<rect x="767" y="716" width="6" height="222" fill="#bdbdbd"/>
<path d="M766.500 716v222M773.500 716v222" stroke="#8a8a8a"/>
<rect x="767" y="799" width="6" height="23" fill="#909090"/><rect x="767" y="833" width="6" height="23" fill="#909090"/>
<path d="M771 808v6l-3-3z" fill="#111"/><path d="M769 842v6l3-3z" fill="#111"/>
<path d="M767 822.500h6M767 856.500h6" stroke="#eee"/>
<rect x="774" y="716" width="1121" height="222" fill="#e9e9e9"/>
<text x="789" y="744" textLength="29" lengthAdjust="spacingAndGlyphs" style="font-size:14px;font-weight:bold;fill:#111">常量</text>
<rect x="830" y="744" width="1040" height="1" fill="#111"/>
<rect x="786" y="754" width="1084" height="184" fill="#c9c9c9"/>
<text x="801" y="773" textLength="29" lengthAdjust="spacingAndGlyphs" style="font-size:14px;font-weight:bold;fill:#111">常规</text>
<text x="944" y="810" textLength="23" lengthAdjust="spacingAndGlyphs" style="font-size:12px">名称</text><text x="973" y="809">:</text>
<text x="920" y="834" textLength="47" lengthAdjust="spacingAndGlyphs" style="font-size:12px">数据类型</text><text x="973" y="833">:</text>
<text x="956" y="858" textLength="11" lengthAdjust="spacingAndGlyphs" style="font-size:12px">值</text><text x="973" y="857">:</text>
<text x="944" y="882" textLength="23" lengthAdjust="spacingAndGlyphs" style="font-size:12px">注释</text><text x="973" y="881">:</text>
<rect x="990.500" y="796.500" width="868" height="17" fill="#e0e0e0" stroke="#868686"/>
<rect x="990.500" y="820.500" width="868" height="17" fill="#e0e0e0" stroke="#868686"/>
<rect x="990.500" y="844.500" width="868" height="17" fill="#e0e0e0" stroke="#868686"/>
<rect x="990.500" y="868.500" width="868" height="17" fill="#e0e0e0" stroke="#868686"/>
<rect x="1842.500" y="821" width="15.500" height="16" fill="#e8e8e8" stroke="#b0b0b0"/><path d="M1847 824h7v10h-7z" fill="#fff" stroke="#777"/><path d="M1849 826.500h3M1849 829h3M1849 831.500h3" stroke="#555"/>
<text x="994" y="809" textLength="67" lengthAdjust="spacingAndGlyphs" style="fill:#222">TOP_WINDER</text>
<text x="994" y="833" textLength="14" lengthAdjust="spacingAndGlyphs" style="fill:#222">Int</text>
<text x="994" y="857" style="fill:#222">1</text>
<rect x="798" y="898" width="1060" height="40" fill="#c0c0c0"/>
<text x="813" y="918" textLength="60" lengthAdjust="spacingAndGlyphs" style="font-size:15px;fill:#111">历史记录</text>
<rect x="1877" y="716" width="18" height="222" fill="#c2c2c2"/>
<use href="#su" x="1877.500" y="718"/>
<rect x="1878" y="737.500" width="16" height="18" fill="#ededed" stroke="#a6a6a6"/><use href="#gr" x="1886" y="747"/>
<use href="#sd" x="1877.500" y="921"/>

<!-- inspector tabs -->
<rect x="1589" y="667" width="75" height="21" fill="#e6e6e6"/>
<rect x="1665.500" y="667.500" width="79" height="21" fill="#bdbdbd" stroke="#8a8a8a"/>
<rect x="1747.500" y="667.500" width="74" height="21" fill="#bdbdbd" stroke="#8a8a8a"/>
<rect x="1593" y="671" width="13" height="14" fill="#dfe6f8" stroke="#6a80c0"/><circle cx="1601" cy="678" r="4" fill="none" stroke="#555" stroke-width="1.300"/><path d="M1604 681l3 3" stroke="#c08020" stroke-width="1.500"/>
<text x="1611" y="684" textLength="29" lengthAdjust="spacingAndGlyphs" style="font-size:14px;font-weight:bold;fill:#111">属性</text>
<rect x="1670" y="671" width="13" height="14" fill="#dfe6f8" stroke="#6a80c0"/><text x="1675" y="683" style="font-size:12px;font-weight:bold;fill:#12204a">i</text>
<text x="1687" y="684" textLength="29" lengthAdjust="spacingAndGlyphs" style="font-size:14px;fill:#444">信息</text>
<rect x="1728" y="672" width="11" height="12" rx="4" fill="#f2d020" stroke="#8a7010"/><text x="1732" y="682" style="font-size:10px;font-weight:bold;fill:#111">i</text>
<rect x="1752" y="671" width="12" height="14" fill="#dfe6f8" stroke="#6a80c0"/><path d="M1755 673v5a2 2 0 0 0 4 0v-5" fill="none" stroke="#333"/><circle cx="1761" cy="682" r="1.500" fill="#333"/>
<text x="1769" y="684" textLength="29" lengthAdjust="spacingAndGlyphs" style="font-size:14px;fill:#444">诊断</text>
<path d="M1845 671h8v11h-2v-0zM1842 673h7v11h-7z" fill="#f4f4f4"/>
<rect x="1860" y="671" width="10" height="13" fill="#d4d4d4" stroke="#f0f0f0"/><path d="M1861 675h8M1861 678h8M1861 681h8" stroke="#f0f0f0"/>
<path d="M1878 674h12l-6 6z" fill="#f4f4f4"/>

<!-- right strip -->
<rect x="1894" y="0" width="2" height="940" fill="#3a3f4c"/>
<rect x="1896" y="0" width="24" height="940" fill="#b0b0b0"/>
<path d="M1909 7v12l-6-6z" fill="#f4f4f4"/>
<rect x="1896.500" y="32" width="20" height="72" fill="#e4e4e4" stroke="#8a8a8a"/>
<rect x="1896.500" y="107.500" width="20" height="73" fill="#dcdcdc" stroke="#8a8a8a"/>
<rect x="1896.500" y="183.500" width="20" height="73" fill="#dcdcdc" stroke="#8a8a8a"/>
<rect x="1896.500" y="259.500" width="20" height="57" fill="#dcdcdc" stroke="#8a8a8a"/>
<rect x="1896.500" y="319.500" width="20" height="60" fill="#dcdcdc" stroke="#8a8a8a"/>
<path d="M1898.500 34.500h6v6h-6zM1906.500 34.500h6v6h-6zM1898.500 42.500h6v6h-6zM1906.500 42.500h6v6h-6z" fill="#fff" stroke="#333"/>
<text transform="translate(1901,56) rotate(90)" textLength="28" lengthAdjust="spacingAndGlyphs" style="font-size:14px;font-weight:bold;fill:#111">指令</text>
<rect x="1900.500" y="111.500" width="11" height="13" fill="#e6ecfa" stroke="#3a5ac0"/><path d="M1903 113v5a2 2 0 0 0 4 0v-5" fill="none" stroke="#111"/><circle cx="1909" cy="120" r="1.200" fill="#111"/>
<text transform="translate(1901,130) rotate(90)" textLength="30" lengthAdjust="spacingAndGlyphs" style="font-size:14px;fill:#555">测试</text>
<rect x="1899.500" y="187.500" width="11" height="14" fill="#f8f0d0" stroke="#a88020"/><path d="M1901 191h7M1901 194h7M1901 197h7" stroke="#333"/><path d="M1905 197l3 3 6-6" fill="none" stroke="#1a9a2a" stroke-width="2"/>
<text transform="translate(1901,207) rotate(90)" textLength="28" lengthAdjust="spacingAndGlyphs" style="font-size:14px;fill:#555">任务</text>
<path d="M1898.500 264h6a2 2 0 0 1 2 1 2 2 0 0 1 2-1h5.500v11h-6l-1.500 1-1.500-1h-6.500zM1906.500 265v11" fill="#f4f8ff" stroke="#14308a" stroke-width="1.200"/>
<text transform="translate(1901,283) rotate(90)" textLength="14" lengthAdjust="spacingAndGlyphs" style="font-size:14px;fill:#555">库</text>
<text transform="translate(1901,333) rotate(90)" textLength="27" lengthAdjust="spacingAndGlyphs" style="font-size:14px;fill:#555">插件</text>

<!-- splitter area label -->
<path d="M586.500 353v24M586.500 387v25" stroke="#f4f4f4"/>
<path d="M587 397v7l3-3.500z" fill="#111"/>
<text transform="translate(580,397) rotate(-90)" textLength="27" lengthAdjust="spacingAndGlyphs" style="font-size:13px;font-weight:bold;fill:#f6f6f6">区域</text>

<!-- dark separators -->
<rect x="566" y="0" width="2" height="940" fill="#1c2333"/>
<rect x="23" y="0" width="1" height="940" fill="#2a3040"/>
<rect x="568" y="661" width="1327" height="3" fill="#1c2333"/>
<rect x="24" y="938" width="1872" height="2" fill="#1c2333"/>
<rect x="0" y="0" width="1920" height="1" fill="#1c2333"/>

<!-- annotations -->
<path d="M278 148L823 88" stroke="#e8242c" stroke-width="3" fill="none"/>
<path d="M823 88L1030 172" stroke="#e8242c" stroke-width="2" fill="none"/>
<path d="M1040.400 176.700L1023.300 176.300L1027.900 165.100Z" fill="#e8242c"/>
<path d="M1163 192L150 504" stroke="#e8242c" stroke-width="2.500" fill="none"/>
<path d="M143 507L155.600 496L159 508Z" fill="#e8242c"/>
<text class="n" x="739" y="212" style="font-weight:bold;font-size:24px;fill:#ee1c25">1</text>
<text class="n" x="354" y="132" style="font-weight:bold;font-size:24px;fill:#ee1c25">2</text>
<text class="n" x="186" y="479" style="font-weight:bold;font-size:24px;fill:#ee1c25">3</text>
<text class="n" x="1255" y="173" style="font-weight:bold;font-size:24px;fill:#ee1c25">4</text>
</svg>
</body></html>
